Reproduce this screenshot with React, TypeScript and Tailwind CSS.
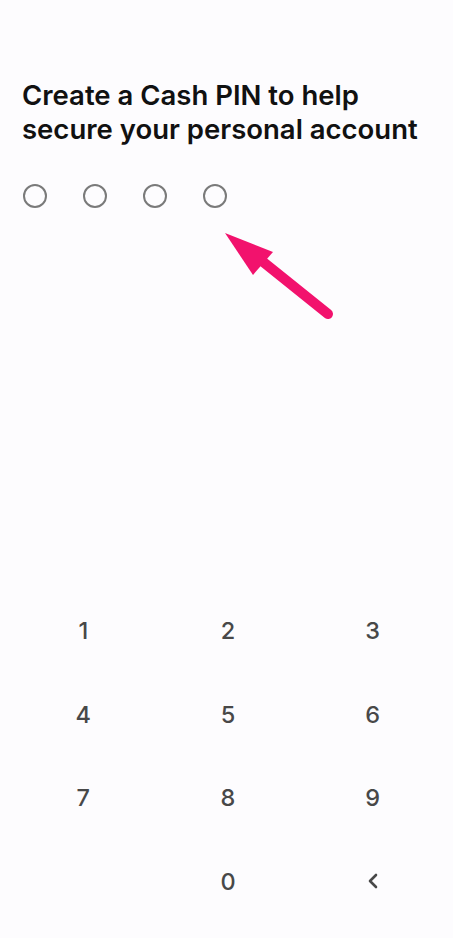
import React from "react";

export default function App() {
  const keys = ["1", "2", "3", "4", "5", "6", "7", "8", "9", "", "0", "<"];
  return (
    <div className="relative w-[453px] h-[938px] bg-[#fdfcfe] overflow-hidden" style={{ fontFamily: "Inter, 'Noto Sans', sans-serif" }}>
      <div className="pt-[78px] px-[22px]">
        <h1 className="text-[27.5px] leading-[34px] font-semibold text-[#111]">
          Create a Cash PIN to help
          <br />
          secure your personal account
        </h1>
        <div className="flex gap-[36px] mt-[38px] pl-[1px]">
          {[0, 1, 2, 3].map((i) => (
            <div key={i} className="w-[24px] h-[24px] rounded-full border-2 border-[#7a7a7a]" />
          ))}
        </div>
      </div>
      <svg className="absolute left-0 top-0" width="453" height="938" viewBox="0 0 453 938">
        <line x1="328" y1="314" x2="262" y2="261" stroke="#f2126d" strokeWidth="10" strokeLinecap="round" />
        <polygon points="225,233 273,252 253,275" fill="#f2126d" />
      </svg>
      <div className="absolute left-0 right-0 top-[589px] pl-[11px] pr-[8px] grid grid-cols-3">
        {keys.map((k, i) => (
          <div key={i} className="h-[83.5px] flex items-center justify-center text-[23.5px] font-medium text-[#484848]">
            {k === "<" ? (
              <svg width="16" height="20" viewBox="0 0 16 20">
                <path d="M11 4 L5 10 L11 16" stroke="#484848" strokeWidth="2.6" fill="none" strokeLinecap="round" strokeLinejoin="round" />
              </svg>
            ) : (
              k
            )}
          </div>
        ))}
      </div>
    </div>
  );
}
